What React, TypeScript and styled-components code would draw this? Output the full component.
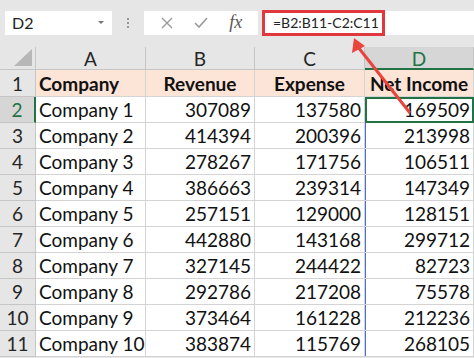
import styled, { createGlobalStyle } from "styled-components";

const GlobalStyle = createGlobalStyle`
  html, body {
    margin: 0;
    padding: 0;
    background: #e6e6e6;
    overflow: hidden;
  }
`;

const rows = [
  ["Company 1", 307089, 137580, 169509],
  ["Company 2", 414394, 200396, 213998],
  ["Company 3", 278267, 171756, 106511],
  ["Company 4", 386663, 239314, 147349],
  ["Company 5", 257151, 129000, 128151],
  ["Company 6", 442880, 143168, 299712],
  ["Company 7", 327145, 244422, 82723],
  ["Company 8", 292786, 217208, 75578],
  ["Company 9", 373464, 161228, 212236],
  ["Company 10", 383874, 115769, 268105],
] as const;

const Page = styled.div`
  position: relative;
  width: 474px;
  height: 358px;
  overflow: hidden;
  font-family: Lato, "Open Sans", sans-serif;
  color: #111;
`;

const FormulaBar = styled.div`
  display: flex;
  align-items: center;
  height: 47px;
  padding-left: 5px;
  box-sizing: border-box;
  padding-bottom: 2px;
`;

const NameBox = styled.div`
  display: flex;
  align-items: center;
  justify-content: space-between;
  width: 107px;
  height: 24px;
  background: #fff;
  padding: 0 8px 0 7px;
  box-sizing: border-box;
  font-size: 16px;
  color: #222;
`;

const Caret = styled.span`
  width: 0;
  height: 0;
  border-left: 3px solid transparent;
  border-right: 3px solid transparent;
  border-top: 3px solid #777;
`;

const Dots = styled.div`
  display: flex;
  flex-direction: column;
  gap: 2px;
  width: 32px;
  align-items: center;
  span {
    width: 2px;
    height: 2px;
    background: #999;
  }
`;

const IconBox = styled.div`
  display: flex;
  align-items: center;
  justify-content: space-around;
  width: 114px;
  height: 24px;
  background: #fff;
  padding: 0 6px 0 6px;
  box-sizing: border-box;
`;

const Fx = styled.span`
  font-family: "Liberation Serif", serif;
  font-style: italic;
  font-size: 18px;
  color: #555;
`;

const FormulaInput = styled.div`
  flex: 1;
  display: flex;
  align-items: center;
  height: 24px;
  background: #fff;
  margin-left: 4px;
`;

const Highlight = styled.span`
  display: flex;
  align-items: center;
  height: 26px;
  width: 123px;
  box-sizing: border-box;
  border: 3px solid #e0383c;
  padding-left: 8px;
  font-size: 14px;
  color: #222;
  white-space: nowrap;
`;

const Sheet = styled.div`
  display: grid;
  grid-template-columns: 36px 110px 109px 110px 1fr;
  grid-template-rows: 23px 27px repeat(10, 26px);
`;

const Corner = styled.div`
  position: relative;
  background: #e6e6e6;
  border-right: 1px solid #c6c6c6;
  border-bottom: 1px solid #c6c6c6;
  &::after {
    content: "";
    position: absolute;
    right: 3px;
    bottom: 3px;
    border-left: 18px solid transparent;
    border-bottom: 17px solid #b7b7b7;
  }
`;

const ColHead = styled.div<{ $active?: boolean }>`
  display: flex;
  align-items: center;
  justify-content: center;
  background: ${(p) => (p.$active ? "#d6d6d6" : "#e6e6e6")};
  color: ${(p) => (p.$active ? "#217346" : "#262626")};
  border-right: 1px solid #c6c6c6;
  border-bottom: ${(p) => (p.$active ? "2px solid #217346" : "1px solid #c6c6c6")};
  font-size: 19px;
  box-sizing: border-box;
  padding-top: 1px;
`;

const RowHead = styled.div<{ $active?: boolean }>`
  display: flex;
  align-items: center;
  justify-content: center;
  background: ${(p) => (p.$active ? "#d6d6d6" : "#e6e6e6")};
  color: ${(p) => (p.$active ? "#217346" : "#262626")};
  border-bottom: 1px solid #c6c6c6;
  border-right: ${(p) => (p.$active ? "2px solid #217346" : "1px solid #c6c6c6")};
  font-size: 19px;
  box-sizing: border-box;
`;

const Cell = styled.div<{
  $align?: "left" | "center" | "right";
  $header?: boolean;
  $selected?: boolean;
  $pageBreak?: boolean;
}>`
  display: flex;
  align-items: center;
  justify-content: ${(p) =>
    p.$align === "right" ? "flex-end" : p.$align === "center" ? "center" : "flex-start"};
  padding: 0 3px 0 3px;
  background: ${(p) => (p.$header ? "#fce4d6" : "#fff")};
  font-size: 19px;
  font-weight: ${(p) => (p.$header ? 700 : 400)};
  border-right: 1px solid #d4d4d4;
  border-bottom: 1px solid #d4d4d4;
  box-sizing: border-box;
  white-space: nowrap;
  overflow: visible;
  ${(p) => p.$selected && "outline: 2px solid #217346; outline-offset: -2px;"}
  ${(p) => p.$pageBreak && "box-shadow: inset 1px 0 0 #4a6ee0;"}
`;

const Arrow = styled.svg`
  position: absolute;
  left: 0;
  top: 0;
  pointer-events: none;
`;

function App() {
  return (
    <Page>
      <GlobalStyle />
      <FormulaBar>
        <NameBox>
          D2
          <Caret />
        </NameBox>
        <Dots>
          <span />
          <span />
          <span />
        </Dots>
        <IconBox>
          <svg width="14" height="14" viewBox="0 0 14 14">
            <path d="M2 2 L12 12 M12 2 L2 12" stroke="#9a9a9a" strokeWidth="1.4" fill="none" />
          </svg>
          <svg width="16" height="14" viewBox="0 0 16 14">
            <path d="M2 7 L6 11 L14 2" stroke="#9a9a9a" strokeWidth="1.6" fill="none" />
          </svg>
          <Fx>fx</Fx>
        </IconBox>
        <FormulaInput>
          <Highlight>=B2:B11-C2:C11</Highlight>
        </FormulaInput>
      </FormulaBar>
      <Sheet>
        <Corner />
        <ColHead>A</ColHead>
        <ColHead>B</ColHead>
        <ColHead>C</ColHead>
        <ColHead $active>D</ColHead>

        <RowHead>1</RowHead>
        <Cell $header>Company</Cell>
        <Cell $header $align="center">Revenue</Cell>
        <Cell $header $align="center">Expense</Cell>
        <Cell $header $align="center">Net Income</Cell>

        {rows.map((r, i) => (
          <>
            <RowHead key={`h${i}`} $active={i === 0}>
              {i + 2}
            </RowHead>
            <Cell key={`a${i}`}>{r[0]}</Cell>
            <Cell key={`b${i}`} $align="right">{r[1]}</Cell>
            <Cell key={`c${i}`} $align="right">{r[2]}</Cell>
            <Cell key={`d${i}`} $align="right" $selected={i === 0} $pageBreak={i > 0}>
              {r[3]}
            </Cell>
          </>
        ))}
      </Sheet>
      <Arrow width="474" height="358">
        <line x1="410" y1="113" x2="358" y2="47" stroke="#e8453f" strokeWidth="3" />
        <polygon points="354,38 352,53 365,46" fill="#e8453f" />
      </Arrow>
    </Page>
  );
}

export default App;
